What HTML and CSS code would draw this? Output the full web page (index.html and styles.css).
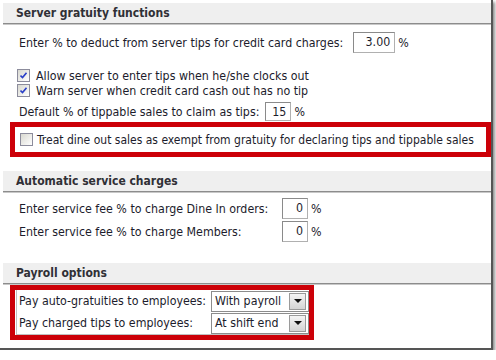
FILE: index.html
```html
<!DOCTYPE html>
<html lang="en">
<head>
    <meta charset="UTF-8">
    <title>Server gratuity options</title>
    <link rel="stylesheet" href="styles.css">
</head>
<body>
    <div class="frame">
        <div class="section-head">Server gratuity functions</div>
        <div class="section-body gratuity">
            <div class="row row-first">
                <span>Enter % to deduct from server tips for credit card charges:</span>
                <span class="num wide">3.00</span>
                <span class="pct">%</span>
            </div>
            <div class="row check-row">
                <span class="box checked"><svg viewBox="0 0 7 7" width="7" height="7"><path d="M0.5 3.5 L2.5 5.5 L6.5 0.8" fill="none" stroke="#2a3fc8" stroke-width="1.6"/></svg></span>
                <span>Allow server to enter tips when he/she clocks out</span>
            </div>
            <div class="row check-row">
                <span class="box checked"><svg viewBox="0 0 7 7" width="7" height="7"><path d="M0.5 3.5 L2.5 5.5 L6.5 0.8" fill="none" stroke="#2a3fc8" stroke-width="1.6"/></svg></span>
                <span>Warn server when credit card cash out has no tip</span>
            </div>
            <div class="row row-default">
                <span>Default % of tippable sales to claim as tips:</span>
                <span class="num small">15</span>
                <span class="pct">%</span>
            </div>
            <div class="highlight dine-out">
                <span class="box"></span>
                <span>Treat dine out sales as exempt from gratuity for declaring tips and tippable sales</span>
            </div>
        </div>

        <div class="section-head">Automatic service charges</div>
        <div class="section-body service">
            <div class="row fee-row">
                <span class="fee-label">Enter service fee % to charge Dine In orders:</span>
                <span class="num small">0</span>
                <span class="pct">%</span>
            </div>
            <div class="row fee-row">
                <span class="fee-label">Enter service fee % to charge Members:</span>
                <span class="num small">0</span>
                <span class="pct">%</span>
            </div>
        </div>

        <div class="section-head">Payroll options</div>
        <div class="highlight payroll">
            <div class="pay-table">
                <div class="pay-row">
                    <span class="pay-label">Pay auto-gratuities to employees:</span>
                    <span class="select">With payroll<span class="arrow"></span></span>
                </div>
                <div class="pay-row">
                    <span class="pay-label">Pay charged tips to employees:</span>
                    <span class="select">At shift end<span class="arrow"></span></span>
                </div>
            </div>
        </div>
    </div>
</body>
</html>
```

FILE: styles.css
```css
body {
    margin: 0;
    background: #ffffff;
    font-family: 'DejaVu Sans Condensed', 'DejaVu Sans', sans-serif;
    font-size: 12.3px;
    color: #1c1c2c;
}
.frame {
    width: 488px;
    height: 348px;
    padding-left: 3px;
    background: #ffffff;
    border-right: 2px solid #555555;
    border-bottom: 2px solid #555555;
    box-shadow: 2px 2px 3px rgba(0, 0, 0, 0.45);
    overflow: hidden;
}
.section-head {
    margin-top: 3px;
    height: 20px;
    line-height: 20px;
    padding-left: 13px;
    background: #efefef;
    border-bottom: 1px solid #8c8c8c;
    box-shadow: 0 1px 0 #c8c8c8;
    font-weight: bold;
    font-size: 12px;
    color: #303036;
}
.section-body {
    padding-left: 16px;
}
.gratuity {
    padding-bottom: 11px;
}
.service {
    padding-bottom: 18px;
}
.row {
    display: flex;
    align-items: center;
    white-space: nowrap;
}
.row-first {
    margin-top: 8px;
    height: 21px;
}
.check-row {
    height: 15px;
    gap: 6px;
    margin-left: -2px;
}
.check-row:nth-child(2) {
    margin-top: 15px;
}
.row-default {
    margin-top: 4px;
    height: 19px;
}
.num {
    box-sizing: border-box;
    height: 100%;
    margin-left: 10px;
    padding-right: 4px;
    border: 1px solid #8a8a8a;
    border-right-color: #b0b0b0;
    border-bottom-color: #b0b0b0;
    text-align: right;
    line-height: 19px;
}
.wide {
    width: 42px;
}
.small {
    width: 26px;
    margin-left: 6px;
}
.pct {
    margin-left: 3px;
}
.box {
    box-sizing: border-box;
    width: 13px;
    height: 13px;
    border: 1px solid #8c8c9c;
    background: linear-gradient(135deg, #d8d8d0, #ffffff);
    display: flex;
    align-items: center;
    justify-content: center;
    flex-shrink: 0;
}
.highlight {
    border: 5px solid #cc0008;
    background: #ffffff;
}
.dine-out {
    margin: 1px 0 0 -9px;
    width: 466px;
    height: 25px;
    display: flex;
    align-items: center;
    gap: 4px;
    padding-left: 5px;
    font-size: 12px;
    white-space: nowrap;
}
.fee-row {
    height: 21px;
    margin-top: 6px;
}
.fee-row + .fee-row {
    margin-top: 2px;
}
.fee-label {
    width: 257px;
    flex-shrink: 0;
}
.fee-row .small {
    margin-left: 6px;
}
.payroll {
    margin: 1px 0 0 7px;
    width: 294px;
    height: 45px;
}
.pay-table {
    height: 45px;
    margin-left: 1px;
    border-left: 1px solid #c0c0c0;
    border-bottom: 1px solid #c0c0c0;
    box-sizing: border-box;
    display: flex;
    flex-direction: column;
    justify-content: space-around;
}
.pay-row {
    display: flex;
    align-items: center;
    height: 21px;
    white-space: nowrap;
}
.pay-label {
    width: 192px;
    padding-left: 2px;
}
.select {
    box-sizing: border-box;
    width: 98px;
    height: 21px;
    border: 1px solid #8c8c8c;
    display: flex;
    align-items: center;
    justify-content: space-between;
    padding-left: 3px;
    padding-right: 2px;
}
.arrow {
    box-sizing: border-box;
    width: 17px;
    height: 17px;
    border: 1px solid #9a9a9a;
    background: linear-gradient(#f4f4f4, #d4d4d4);
    display: flex;
    align-items: center;
    justify-content: center;
}
.arrow::after {
    content: "";
    border-left: 4px solid transparent;
    border-right: 4px solid transparent;
    border-top: 4px solid #111111;
}
```
